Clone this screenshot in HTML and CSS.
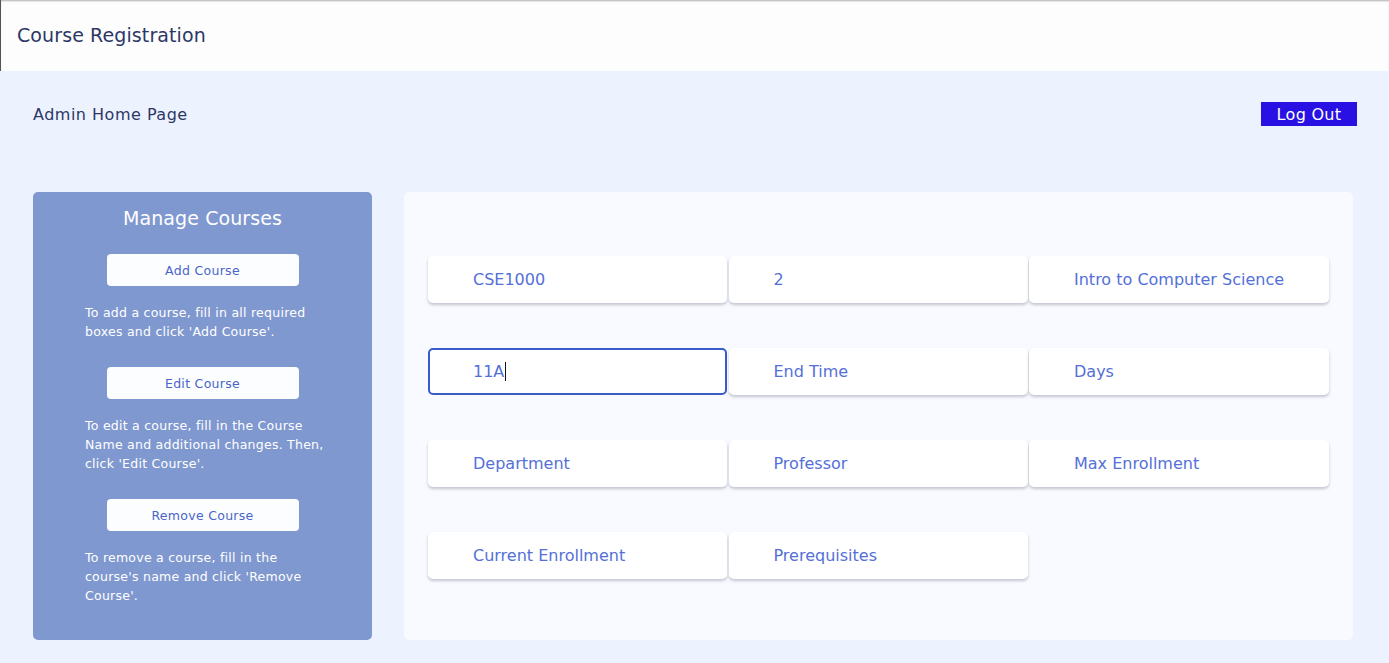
FILE: index.html
```html
<!DOCTYPE html>
<html lang="en">
<head>
<meta charset="utf-8">
<title>Course Registration</title>
<link rel="stylesheet" href="styles.css">
</head>
<body>
<header class="topbar">
  <h1 class="brand">Course Registration</h1>
</header>
<main class="page">
  <div class="page-head">
    <h2 class="page-title">Admin Home Page</h2>
    <button class="logout">Log Out</button>
  </div>
  <div class="content">
    <aside class="manage">
      <h3 class="manage-title">Manage Courses</h3>
      <button class="action">Add Course</button>
      <p class="hint">To add a course, fill in all required boxes and click 'Add Course'.</p>
      <button class="action">Edit Course</button>
      <p class="hint">To edit a course, fill in the Course Name and additional changes. Then, click 'Edit Course'.</p>
      <button class="action">Remove Course</button>
      <p class="hint">To remove a course, fill in the course's name and click 'Remove Course'.</p>
    </aside>
    <section class="form-card">
      <div class="fields">
        <input class="field" type="text" value="CSE1000" placeholder="Course Name">
        <input class="field" type="text" value="2" placeholder="Credits">
        <input class="field" type="text" value="Intro to Computer Science" placeholder="Title">
        <div class="field field-focus"><span>11A</span><span class="caret"></span></div>
        <input class="field" type="text" placeholder="End Time">
        <input class="field" type="text" placeholder="Days">
        <input class="field" type="text" placeholder="Department">
        <input class="field" type="text" placeholder="Professor">
        <input class="field" type="text" placeholder="Max Enrollment">
        <input class="field" type="text" placeholder="Current Enrollment">
        <input class="field" type="text" placeholder="Prerequisites">
      </div>
    </section>
  </div>
</main>
</body>
</html>
```

FILE: styles.css
```css
* { box-sizing: border-box; }
html, body { margin: 0; padding: 0; }
body {
  font-family: "DejaVu Sans", "Noto Sans", sans-serif;
  background: #edf3fe;
  height: 663px;
  overflow: hidden;
}
.topbar {
  height: 71px;
  background: #fdfdfd;
  border-left: 1px solid #555;
  box-shadow: inset 0 2px 2px -1px #b0b0b0;
  display: flex;
  align-items: center;
  padding-left: 16px;
}
.brand {
  margin: 0;
  font-size: 19px;
  font-weight: normal;
  color: #2c3766;
  letter-spacing: 0.1px;
  padding-bottom: 2px;
}
.page {
  padding: 0 32px 0 33px;
}
.page-head {
  display: flex;
  justify-content: space-between;
  align-items: center;
  height: 86px;
}
.page-title {
  margin: 0;
  font-size: 16px;
  font-weight: normal;
  color: #2c3766;
  letter-spacing: 0.5px;
  padding-top: 1px;
}
.logout {
  font-family: inherit;
  background: #2811e2;
  color: #fff;
  border: none;
  font-size: 16px;
  letter-spacing: 0.3px;
  width: 96px;
  height: 24px;
  padding: 0;
  cursor: pointer;
}
.content {
  display: flex;
  gap: 32px;
  margin-top: 35px;
}
.manage {
  width: 339px;
  height: 448px;
  background: #7f98cf;
  border-radius: 5px;
  display: flex;
  flex-direction: column;
  align-items: center;
  padding-top: 14px;
}
.manage-title {
  margin: 0;
  font-size: 19px;
  font-weight: normal;
  color: #fff;
  height: 25px;
  line-height: 25px;
  letter-spacing: 0.1px;
}
.action {
  font-family: inherit;
  width: 192px;
  height: 32px;
  background: #fcfdff;
  color: #4a64c8;
  border: none;
  border-radius: 4px;
  font-size: 12.5px;
  letter-spacing: 0.3px;
  margin-top: 23px;
  padding: 0;
  cursor: pointer;
}
.hint {
  width: 240px;
  margin: 17px 0 0 52px;
  color: #fff;
  font-size: 12.5px;
  letter-spacing: 0.25px;
  line-height: 19px;
  align-self: flex-start;
}
.hint + .action { margin-top: 26px; }
.form-card {
  width: 949px;
  height: 448px;
  background: #f8faff;
  border-radius: 5px;
  padding: 64px 24px 0 24px;
}
.fields {
  display: grid;
  grid-template-columns: 299px 299px 300px;
  column-gap: 1.5px;
  row-gap: 45px;
}
.field {
  height: 47px;
  border: none;
  border-radius: 5px;
  background: #fff;
  box-shadow: 0 2px 3px rgba(60, 60, 90, 0.28);
  font-family: inherit;
  font-size: 16px;
  color: #5470d8;
  padding: 0 0 0 45px;
  outline: none;
}
.field::placeholder { color: #5470d8; opacity: 1; }
.field-focus {
  display: flex;
  align-items: center;
  border: 2px solid #3a5cc8;
  padding-left: 43px;
  box-shadow: none;
}
.caret {
  display: inline-block;
  width: 1px;
  height: 19px;
  background: #111;
  margin-left: 1px;
}
```
